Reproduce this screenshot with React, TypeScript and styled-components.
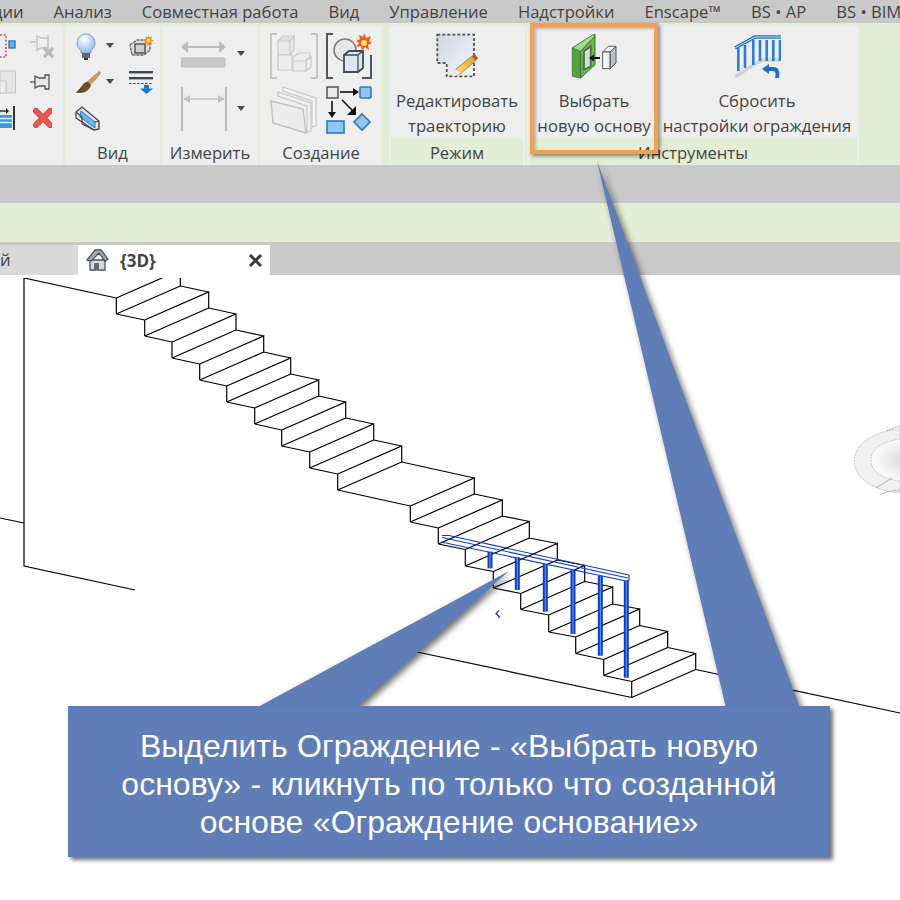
import styled, { createGlobalStyle } from "styled-components";

const GlobalStyle = createGlobalStyle`
	html, body {
		margin: 0;
		padding: 0;
		background: #fff;
	}
`;

const Page = styled.div`
	position: relative;
	width: 900px;
	height: 900px;
	overflow: hidden;
	display: flex;
	flex-direction: column;
	background: #fff;
	font-family: "Open Sans", "Noto Sans", sans-serif;
	color: #444;
`;

const MenuBar = styled.div`
	height: 23px;
	flex: none;
	display: flex;
	gap: 30px;
	align-items: center;
	background: #c9c9c9;
	font-size: 16.6px;
	white-space: nowrap;
	overflow: hidden;
	line-height: 18px;
`;

const ClippedItem = styled.span`
	margin-left: -8px;
`;

const Ribbon = styled.div`
	height: 142px;
	flex: none;
	display: flex;
	gap: 2px;
	padding-top: 3px;
	box-sizing: border-box;
	background: #e4eed6;
`;

const Panel = styled.div<{ $w: number; $gapLeft?: number }>`
	width: ${(p) => p.$w}px;
	margin-left: ${(p) => p.$gapLeft ?? 0}px;
	flex: none;
	display: flex;
	flex-direction: column;
	background: #eeeeee;
`;

const ToolGrid = styled.div<{ $cols: string; $rows: string; $pad: string; $rowGap?: number }>`
	height: 112px;
	box-sizing: border-box;
	padding: ${(p) => p.$pad};
	display: grid;
	grid-template-columns: ${(p) => p.$cols};
	grid-template-rows: ${(p) => p.$rows};
	row-gap: ${(p) => p.$rowGap ?? 0}px;
	align-items: center;
`;

const ToolRow = styled.div`
	height: 112px;
	display: flex;
`;

const BigTool = styled.div<{ $w: number }>`
	width: ${(p) => p.$w}px;
	flex: none;
	display: flex;
	flex-direction: column;
	align-items: center;
	padding-top: 7px;
	box-sizing: border-box;
	font-size: 16.7px;
	line-height: 25px;
	text-align: center;
	white-space: nowrap;
`;

const BigLabel = styled.div`
	margin-top: 7px;
`;

const PanelLabel = styled.div<{ $tint?: boolean }>`
	height: 27px;
	flex: none;
	margin: ${(p) => (p.$tint ? "0 2px" : "0")};
	background: ${(p) => (p.$tint ? "#e4eed6" : "transparent")};
	font-size: 16.6px;
	line-height: 30px;
	text-align: center;
	white-space: nowrap;
`;

const GrayBar = styled.div`
	height: 38px;
	flex: none;
	background: #c9c9c9;
`;

const OptionsBar = styled.div`
	height: 39px;
	flex: none;
	background: #e4eed6;
`;

const TabStrip = styled.div`
	height: 33px;
	flex: none;
	display: flex;
	align-items: flex-end;
	background: #c9c9c9;
`;

const InactiveTab = styled.div`
	width: 78px;
	height: 30px;
	box-sizing: border-box;
	background: #d9d9d9;
	font-size: 16.6px;
	line-height: 30px;
`;

const ActiveTab = styled.div`
	width: 192px;
	height: 30px;
	box-sizing: border-box;
	padding: 0 7px 0 7px;
	display: flex;
	align-items: center;
	background: #fff;
`;

const TabTitle = styled.span`
	margin-left: 11px;
	flex: 1;
	font-size: 17px;
	font-weight: 700;
	color: #444;
`;

const Viewport = styled.div`
	flex: 1;
	min-height: 0;
	background: #fff;
`;

const Drawing = styled.svg`
	display: block;
`;

const Highlight = styled.div`
	position: absolute;
	left: 530px;
	top: 23px;
	width: 128px;
	height: 131px;
	box-sizing: border-box;
	border: 4px solid #f5a04e;
	box-shadow: 2px 2px 4px rgba(0, 0, 0, 0.45), inset 2px 2px 3px rgba(0, 0, 0, 0.25);
`;

const Tails = styled.svg`
	position: absolute;
	left: 0;
	top: 0;
	filter: drop-shadow(3px 3px 3px rgba(0, 0, 0, 0.55));
`;

const Callout = styled.div`
	position: absolute;
	left: 68px;
	top: 706px;
	width: 762px;
	height: 151px;
	box-sizing: border-box;
	padding-top: 21px;
	background: #5f7db6;
	box-shadow: 3px 3px 4px rgba(0, 0, 0, 0.55);
	color: #fff;
	font-family: "Liberation Sans", Arial, sans-serif;
	font-size: 32px;
	word-spacing: 0.6px;
	line-height: 38px;
	text-align: center;
	white-space: nowrap;
`;

const Caret = () => (
	<svg width="8" height="6" viewBox="0 0 8 6">
		<path d="M0 0H8L4 5Z" fill="#4a4a4a" />
	</svg>
);

const Bulb = () => (
	<svg width="22" height="27" viewBox="0 0 22 27">
		<defs>
			<radialGradient id="bulb" cx="0.4" cy="0.3" r="0.8">
				<stop offset="0" stopColor="#ffffff" />
				<stop offset="1" stopColor="#86aee6" />
			</radialGradient>
		</defs>
		<path d="M11 1a9 9 0 0 1 5 16.4V20H6v-2.6A9 9 0 0 1 11 1Z" fill="url(#bulb)" stroke="#7f9fcb" />
		<rect x="7" y="20" width="8" height="5" fill="#666" />
		<rect x="9" y="25" width="4" height="2" fill="#333" />
	</svg>
);

const ViewBoxIcon = () => (
	<svg width="25" height="22" viewBox="0 0 25 22">
		<path d="M1 10l7-5h13v10l-6 5H3Z" fill="#ddd" stroke="#666" strokeWidth="1.4" strokeDasharray="3 1" />
		<rect x="6" y="9" width="10" height="9" fill="#cfcfcf" stroke="#555" strokeWidth="1.5" />
		<path d="M19 0l1.5 2.5L23 1.5l-.8 2.8L25 5.5l-2.8 1L23 9.5l-2.6-1.2L18.5 11l-.8-2.8-2.7.6 1.2-2.6L14 4.5l2.8-.6-.3-2.5 2 1Z" fill="#f08a18" />
		<circle cx="19.5" cy="5.5" r="2" fill="#ffe27a" />
	</svg>
);

const Brush = () => (
	<svg width="26" height="23" viewBox="0 0 26 23">
		<path d="M24.5 0.5C21 3 16 7 12.5 11l2.5 2.5C19 10 23 6 25.5 2Z" fill="#d69a58" stroke="#a8652c" strokeWidth="0.6" />
		<path d="M12.5 10.5C7 12 6 18 0.5 21.5C7 23 14 21 16 14Z" fill="#6e4a26" />
	</svg>
);

const LineWeights = () => (
	<svg width="25" height="23" viewBox="0 0 25 23">
		<rect x="0" y="0" width="24" height="2.4" fill="#3f4750" />
		<rect x="0" y="6" width="24" height="2.4" fill="#3f4750" />
		<path d="M0 12.5H24" stroke="#3f4750" strokeWidth="1.2" strokeDasharray="2.5 1.5" />
		<path d="M15 14h5v3.5h4L17.5 23 11 17.5h4Z" fill="#1f78d0" />
	</svg>
);

const SectionBox = () => (
	<svg width="25" height="25" viewBox="0 0 25 25">
		<path d="M1 6l6-5 17 14v8l-5 1L1 12Z" fill="#dfe7ee" stroke="#444" strokeWidth="1.3" />
		<path d="M6 5l14 11v6L5 11Z" fill="#68b2ef" stroke="#2d78c2" strokeWidth="1" />
		<path d="M1 6l6 5v7M20 16l4-1M7 18l12 6" fill="none" stroke="#444" strokeWidth="1.2" />
	</svg>
);

const DashedPick = () => (
	<svg width="16" height="24" viewBox="0 0 16 24">
		<path d="M0 1H6V23H0" fill="none" stroke="#d8504a" strokeWidth="1.6" strokeDasharray="2 1.6" />
		<rect x="9" y="7" width="6" height="7" fill="#6fb3e6" stroke="#2e78bd" strokeWidth="1.4" />
	</svg>
);

const GrayCorner = () => (
	<svg width="16" height="24" viewBox="0 0 16 24">
		<path d="M0 1H15.5V23H0Z" fill="#e5e5e5" stroke="#c5c5c5" />
		<path d="M0 11H6V23H0Z" fill="#eeeeee" stroke="#c5c5c5" />
	</svg>
);

const ArrowBars = () => (
	<svg width="16" height="24" viewBox="0 0 16 24">
		<rect x="0" y="9" width="12" height="13" fill="#3b98e8" />
		<path d="M0 12.5H12M0 16.5H12" stroke="#dff0ff" strokeWidth="1.4" />
		<path d="M0 5H7" stroke="#222" strokeWidth="1.4" />
		<path d="M6 2l3 3-3 3Z" fill="#222" />
		<rect x="13" y="0" width="2" height="24" fill="#30363c" />
	</svg>
);

const PinDisabled = () => (
	<svg width="25" height="24" viewBox="0 0 25 24">
		<path d="M0 8H7M7 2l4 2H18V1V15l-1-1H11L7 16Z" fill="none" stroke="#c4c4c4" strokeWidth="1.4" />
		<path d="M14 14l9 9M23 14l-9 9" stroke="#b9b9b9" strokeWidth="3.2" />
	</svg>
);

const Pin = () => (
	<svg width="20" height="20" viewBox="0 0 20 20">
		<path d="M0 10H5" stroke="#555" strokeWidth="1.3" />
		<path d="M5 4l4 2h6V3h4v14h-4v-3H9l-4 2Z" fill="#e8e8e8" stroke="#555" strokeWidth="1.3" />
	</svg>
);

const RedCross = () => (
	<svg width="22" height="20" viewBox="0 0 22 20">
		<path d="M6 3l14 14M20 3L6 17" stroke="#c7413c" strokeWidth="6" strokeLinecap="round" />
		<path d="M6 3l14 14M20 3L6 17" stroke="#f2584f" strokeWidth="4" strokeLinecap="round" />
	</svg>
);

const Measure = () => (
	<svg width="45" height="28" viewBox="0 0 45 28">
		<path d="M3 7H42" stroke="#bdbdbd" strokeWidth="2" />
		<path d="M0 7l7-6v12ZM45 7l-7-6v12Z" fill="#bdbdbd" />
		<rect x="0" y="18" width="44" height="9" rx="1" fill="#c8c8c8" stroke="#bcbcbc" />
	</svg>
);

const Dimension = () => (
	<svg width="46" height="44" viewBox="0 0 46 44">
		<path d="M1 0V44M45 0V44" stroke="#bdbdbd" strokeWidth="2" />
		<path d="M3 12H43" stroke="#c2c2c2" strokeWidth="1.6" />
		<path d="M2 12l7-4v8ZM44 12l-7-4v8Z" fill="#c2c2c2" />
	</svg>
);

const Assembly = () => (
	<svg width="48" height="46" viewBox="0 0 48 46">
		<path d="M7 1H1V45H7M41 1H47V45H41" fill="none" stroke="#c6c6c6" strokeWidth="2" />
		<path d="M8 8l5-5h11v5l-4 4H8Z" fill="#e0e0e0" stroke="#cbcbcb" strokeWidth="1.2" />
		<path d="M8 8H20V22H8ZM20 8l4-5v14l-4 5Z" fill="#e8e8e8" stroke="#cbcbcb" strokeWidth="1.2" />
		<path d="M8 22H22V37H8Z" fill="#ededed" stroke="#cbcbcb" strokeWidth="1.2" />
		<path d="M23 24l6-4h11v4l-5 4H23ZM23 28H36V38H23ZM36 28l5-4v10l-5 4Z" fill="#ededed" stroke="#cbcbcb" strokeWidth="1.2" />
	</svg>
);

const MassIcon = () => (
	<svg width="46" height="46" viewBox="0 0 46 46">
		<path d="M7 1H1V45H7M36 45H45V22" fill="none" stroke="#50565e" strokeWidth="2" />
		<circle cx="19" cy="17" r="11" fill="#e6e6e6" stroke="#7d7d7d" strokeWidth="1.5" />
		<path d="M18 22l5-4h14v17l-5 4H18Z" fill="#dde6ef" stroke="#454b52" strokeWidth="1.8" />
		<path d="M18 22H32V39M32 22l5-4" fill="none" stroke="#454b52" strokeWidth="1.3" />
		<path d="M38 0l2 5 5-2-2 5 3 2-4 2 1 5-4-3-3 4-1-5-5 1 3-4-3-2 4-2-1-4 4 2Z" fill="#ef5a1c" />
		<circle cx="38" cy="10" r="3" fill="#ffe96e" />
	</svg>
);

const Walls = () => (
	<svg width="48" height="48" viewBox="0 0 48 48">
		<path d="M13 1l33 11v28l-4 1V15L13 5Z" fill="#f2f2f2" stroke="#c9c9c9" strokeWidth="1.2" />
		<path d="M8 6l33 11v28l-4 1V20L8 10Z" fill="#f0f0f0" stroke="#c9c9c9" strokeWidth="1.2" />
		<path d="M1 15l32 8 3 24L3 37Z" fill="#ececec" stroke="#c2c2c2" strokeWidth="1.4" />
	</svg>
);

const FlowIcon = () => (
	<svg width="46" height="48" viewBox="0 0 46 48">
		<rect x="1" y="1" width="11" height="11" fill="#e9e9e9" stroke="#555" strokeWidth="1.5" />
		<path d="M14 6H28" stroke="#111" strokeWidth="1.6" />
		<path d="M27 2l6 4-6 4Z" fill="#111" />
		<rect x="34" y="1" width="11" height="11" rx="1" fill="#8ec7ee" stroke="#2e78bd" strokeWidth="1.5" />
		<path d="M6 15V27" stroke="#111" strokeWidth="1.6" />
		<path d="M2 26h8l-4 6Z" fill="#111" />
		<path d="M16 14L27 25" stroke="#111" strokeWidth="1.6" />
		<path d="M30 20v9h-9Z" fill="#111" />
		<rect x="1" y="35" width="17" height="12" fill="#8ec7ee" stroke="#2e78bd" strokeWidth="1.6" />
		<path d="M36 28l8 8-8 8-8-8Z" fill="#8ec7ee" stroke="#2e78bd" strokeWidth="1.6" />
	</svg>
);

const EditPath = () => (
	<svg width="44" height="48" viewBox="0 0 44 48">
		<defs>
			<linearGradient id="sheet" x1="0" y1="0" x2="1" y2="1">
				<stop offset="0" stopColor="#d0d6e0" />
				<stop offset="1" stopColor="#f4f5f7" />
			</linearGradient>
			<linearGradient id="pencil" x1="0" y1="1" x2="1" y2="0">
				<stop offset="0" stopColor="#ffe58a" />
				<stop offset="1" stopColor="#e0a21f" />
			</linearGradient>
		</defs>
		<path d="M2.3 1.7H39V43.3H11.7V30H2.3Z" fill="url(#sheet)" stroke="#555" strokeWidth="1.8" strokeDasharray="3 2" />
		<path d="M21 36L37 23l4 4.5-16 13.5-6 2Z" fill="url(#pencil)" stroke="#8b6a1c" strokeWidth="0.7" />
		<path d="M37 23l2.5-2 3.5 4-2 2.5Z" fill="#a5552f" />
		<path d="M18 43.5l2.6-7.2 4.6 5Z" fill="#f2f2f2" />
	</svg>
);

const PickHost = () => (
	<svg width="50" height="48" viewBox="0 0 50 48">
		<defs>
			<linearGradient id="hostBlock" x1="0" y1="0" x2="1" y2="0">
				<stop offset="0" stopColor="#ffffff" />
				<stop offset="1" stopColor="#e4e7ea" />
			</linearGradient>
		</defs>
		<path d="M3.3 15L26 1V3.3L11.7 18.3V45L3.3 43.3Z" fill="#5aa041" stroke="#2f7d2c" strokeWidth="0.8" />
		<path d="M3.3 15L24 1.6 26 3.3 11.7 18.3Z" fill="#a5d88a" stroke="#2f7d2c" strokeWidth="0.8" />
		<path d="M11.7 18.3L26 3.3V31.7L11.7 45Z" fill="#73b255" stroke="#2f7d2c" strokeWidth="1" />
		<path d="M15 18.3L21.7 13.3V33.3L15 36.7Z" fill="#d8dfd2" stroke="#4f6d49" strokeWidth="1.8" />
		<path d="M20 25l5-3.5v7Z" fill="#111" />
		<path d="M24 25H31" stroke="#111" strokeWidth="2" />
		<path d="M33.7 19L39.3 13.3H47L41 19Z" fill="#f4f4f4" stroke="#555" strokeWidth="1" />
		<path d="M41 19L47 13.3V30L41 35.7Z" fill="#b9bfc6" stroke="#555" strokeWidth="1" />
		<path d="M33.7 19H41V35.7H33.7Z" fill="url(#hostBlock)" stroke="#555" strokeWidth="1" />
	</svg>
);

const ResetRail = () => (
	<svg width="48" height="48" viewBox="0 0 48 48">
		<path d="M2 44L20 32L30 27H47" fill="none" stroke="#d2d2d2" strokeWidth="3.5" />
		<path d="M5.3 15V38M12 12V35M20.3 7V32M27 7V28M33.7 7V28M40.3 7V28M47 7V28" stroke="#2c7fd0" strokeWidth="2.6" />
		<path d="M2 15L22 4H48" fill="none" stroke="#1f6fc0" strokeWidth="3.4" />
		<path d="M2 15L22 4H48" fill="none" stroke="#cfe4f8" strokeWidth="1" />
		<path d="M36 31l-7 5 7 5v-3h4c3 0 3 3 2 7h4c1-7 0-11-6-11h-4Z" fill="#1f6fc0" />
	</svg>
);

const HomeIcon = () => (
	<svg width="24" height="24" viewBox="0 0 24 24">
		<path d="M5 12h15v10H5Z" fill="#d8dbde" stroke="#4f555b" strokeWidth="1.3" />
		<path d="M2 12L10 2h6l7 9-3 2-6-8-8 8Z" fill="#a8adb3" stroke="#4f555b" strokeWidth="1.3" />
		<path d="M9 22v-7h5v7Z" fill="#666c72" />
	</svg>
);

const CloseIcon = () => (
	<svg width="15" height="15" viewBox="0 0 15 15">
		<path d="M2 2l11 11M13 2L2 13" stroke="#3a3a3a" strokeWidth="3" />
	</svg>
);

type Step = [number, number, number];

const UPPER: Step[] = [
	[116.3, 298, 314],
	[144.7, 320, 336],
	[172, 342, 358],
	[199.7, 364, 380],
	[226.7, 386, 402],
	[254.7, 408, 424],
	[281.7, 430, 446],
	[309.7, 452, 468],
	[337.7, 474, 490],
];

const LOWER: Step[] = [
	[410.3, 506, 522],
	[438.3, 528, 544],
	[465.3, 549.5, 566],
	[493.3, 571.5, 588],
	[520.7, 593.5, 609.5],
	[548.7, 615, 632],
	[575.7, 637, 653.5],
	[603.7, 659.5, 675.5],
	[631.7, 681.5, 697.5],
];

const flightPath = (steps: Step[]) => {
	let d = "";
	steps.forEach(([x, top, bottom], i) => {
		d += `M${x} ${top}V${bottom}`;
		d += `M${x} ${top}L${x + 64} ${top - 28}V${bottom - 28}`;
		d += `M${x} ${bottom}L${x + 64} ${bottom - 28}`;
		if (i < steps.length - 1) {
			const [nx, ntop] = steps[i + 1];
			d += `M${x} ${bottom}L${nx} ${ntop}`;
			d += `M${x + 64} ${bottom - 28}L${nx + 64} ${ntop - 28}`;
		}
	});
	return d;
};

const POSTS = [
	[490, 551.7, 568.3],
	[517.3, 557.3, 590],
	[545.3, 564, 611.7],
	[573, 570, 634],
	[600.3, 576, 655.7],
	[626.3, 581, 677.7],
];

const StairDrawing = () => (
	<Drawing width="900" height="625" viewBox="0 275 900 625">
		<defs>
			<clipPath id="model">
				<rect x="0" y="278" width="900" height="622" />
			</clipPath>
			<radialGradient id="cubeFade">
				<stop offset="0" stopColor="#dedede" />
				<stop offset="1" stopColor="#ffffff" />
			</radialGradient>
		</defs>
		<g clipPath="url(#model)" fill="none" stroke="#000" strokeWidth="1.2">
			<path d="M116.3 298L24 278V566L135 590M0 518L24 523" />
			<path d={flightPath(UPPER)} />
			<path d="M337.7 490L410.3 506M401.7 462L474.3 478" />
			<path d={flightPath(LOWER)} />
			<path d="M417 652L631.7 697.5M695.7 669.5L900 713" />
		</g>
		<g fill="none" stroke="#0b3fc6" strokeWidth="1.1">
			<path d="M442 535.5H449L629 575M442 537.5L628 578M441 542L626 581M629 575V580L626 581" />
			<path d="M499 617l-3 -3.5 3 -3M496 613.5l3.5 3-1 1.5" />
		</g>
		{POSTS.map(([x, y1, y2]) => (
			<g key={x}>
				<rect x={x - 2.5} y={y1} width="5" height={y2 - y1} fill="#0b3fc6" />
				<rect x={x - 0.5} y={y1} width="1" height={y2 - y1} fill="#7e9be6" />
			</g>
		))}
		<g>
			<ellipse cx="900" cy="460" rx="30" ry="24" fill="url(#cubeFade)" />
			<path d="M900 429C870 432 855 445 854 461C855 477 870 490 900 493V481C880 479 871 470 871 460C871 450 880 442 900 439Z" fill="#f1f1f1" stroke="#c4c4c4" strokeDasharray="2 1" />
			<path d="M876 488L892 478M880 495C888 490 896 491 900 490M886 431L900 426" fill="none" stroke="#b5b5b5" />
		</g>
	</Drawing>
);

export default function App() {
	return (
		<Page>
			<GlobalStyle />
			<MenuBar>
				<ClippedItem>ции</ClippedItem>
				<span>Анализ</span>
				<span>Совместная работа</span>
				<span>Вид</span>
				<span>Управление</span>
				<span>Надстройки</span>
				<span>Enscape™</span>
				<span>BS • AP</span>
				<span>BS • BIM</span>
			</MenuBar>
			<Ribbon>
				<Panel $w={63}>
					<ToolGrid $cols="30px 1fr" $rows="36px 36px 36px" $pad="2px 0 0 0">
						<DashedPick />
						<PinDisabled />
						<GrayCorner />
						<Pin />
						<ArrowBars />
						<RedCross />
					</ToolGrid>
					<PanelLabel />
				</Panel>
				<Panel $w={95}>
					<ToolGrid $cols="31px 23px 25px" $rows="36px 36px 36px" $pad="2px 0 0 10px">
						<Bulb />
						<Caret />
						<ViewBoxIcon />
						<Brush />
						<Caret />
						<LineWeights />
						<SectionBox />
					</ToolGrid>
					<PanelLabel>Вид</PanelLabel>
				</Panel>
				<Panel $w={96}>
					<ToolGrid $cols="56px 1fr" $rows="52px 58px" $pad="2px 0 0 19px">
						<Measure />
						<Caret />
						<Dimension />
						<Caret />
					</ToolGrid>
					<PanelLabel>Измерить</PanelLabel>
				</Panel>
				<Panel $w={122}>
					<ToolGrid $cols="56px 1fr" $rows="46px 48px" $rowGap={7} $pad="7px 0 0 10px">
						<Assembly />
						<MassIcon />
						<Walls />
						<FlowIcon />
					</ToolGrid>
					<PanelLabel>Создание</PanelLabel>
				</Panel>
				<Panel $w={136} $gapLeft={5}>
					<ToolRow>
						<BigTool $w={136}>
							<EditPath />
							<BigLabel>
								Редактировать
								<br />
								траекторию
							</BigLabel>
						</BigTool>
					</ToolRow>
					<PanelLabel $tint>Режим</PanelLabel>
				</Panel>
				<Panel $w={332}>
					<ToolRow>
						<BigTool $w={134}>
							<PickHost />
							<BigLabel>
								Выбрать
								<br />
								новую основу
							</BigLabel>
						</BigTool>
						<BigTool $w={192}>
							<ResetRail />
							<BigLabel>
								Сбросить
								<br />
								настройки ограждения
							</BigLabel>
						</BigTool>
					</ToolRow>
					<PanelLabel $tint>Инструменты</PanelLabel>
				</Panel>
			</Ribbon>
			<GrayBar />
			<OptionsBar />
			<TabStrip>
				<InactiveTab>й</InactiveTab>
				<ActiveTab>
					<HomeIcon />
					<TabTitle>{"{3D}"}</TabTitle>
					<CloseIcon />
				</ActiveTab>
			</TabStrip>
			<Viewport>
				<StairDrawing />
			</Viewport>
			<Highlight />
			<Tails width="900" height="900" viewBox="0 0 900 900">
				<polygon points="509,571 256,708 356,708" fill="#5f7db6" />
				<polygon points="597,161 726,708 800,708" fill="#5f7db6" />
			</Tails>
			<Callout>
				Выделить Ограждение - «Выбрать новую
				<br />
				основу» - кликнуть по только что созданной
				<br />
				основе «Ограждение основание»
			</Callout>
		</Page>
	);
}
